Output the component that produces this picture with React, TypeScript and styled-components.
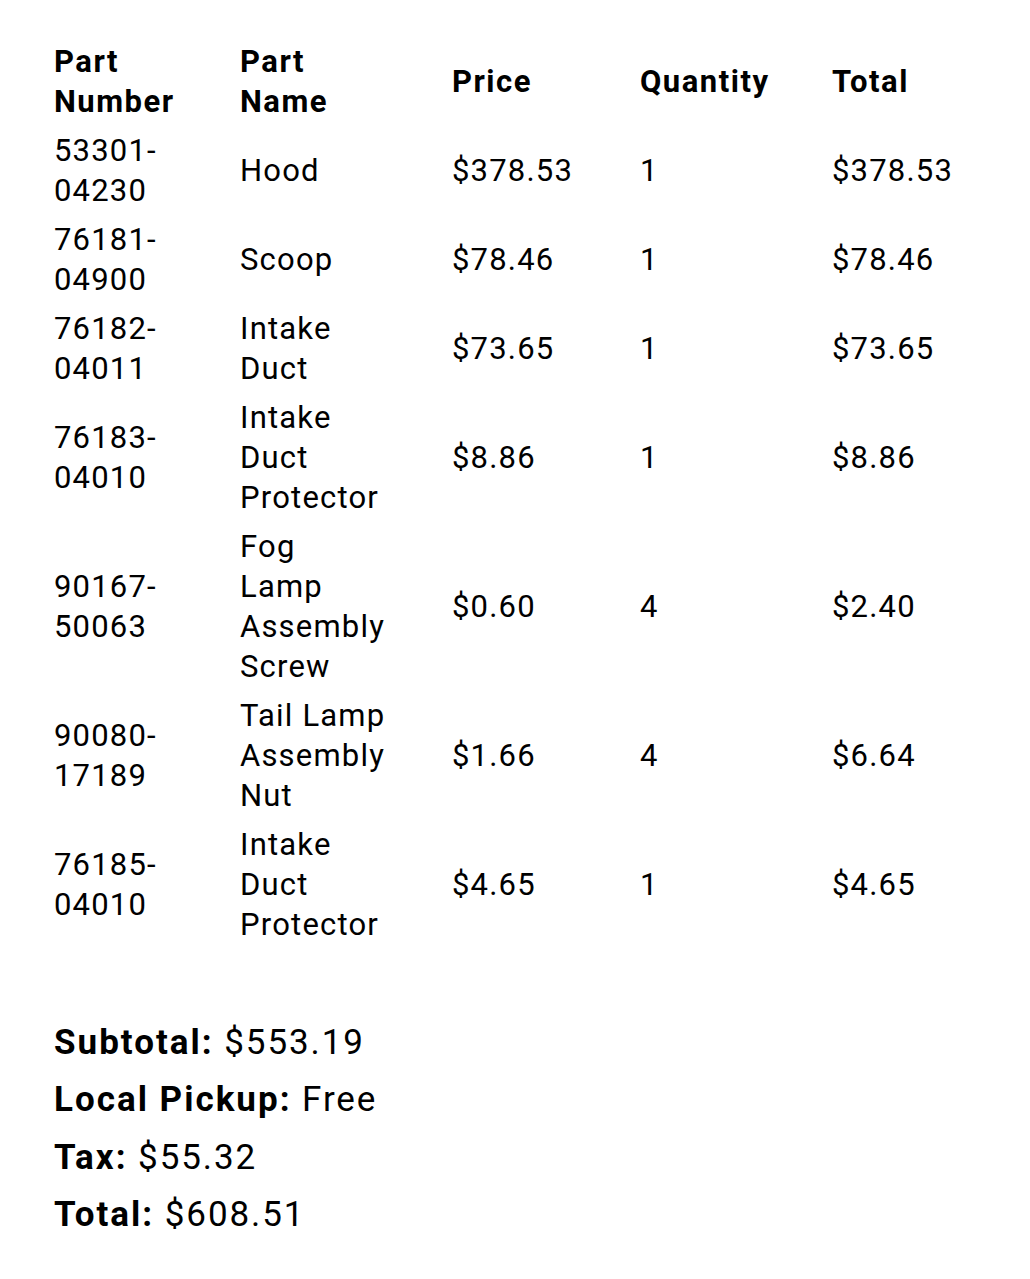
import React from "react";
import styled, { createGlobalStyle } from "styled-components";

const Global = createGlobalStyle`
  html, body { margin: 0; padding: 0; background: #fff; }
  body { font-family: Roboto, "Noto Sans", Arial, sans-serif; color: #000; }
`;

const Page = styled.div`
  padding: 37px 0 40px 54px;
`;

const Table = styled.table`
  border-collapse: collapse;
  table-layout: fixed;
  width: 940px;
  font-size: 31px;
  letter-spacing: 1.2px;
  line-height: 40px;
`;

const Col = styled.col<{ $w: number }>`
  width: ${(p) => p.$w}px;
`;

const Th = styled.th<{ $pr?: number }>`
  text-align: left;
  font-weight: 700;
  letter-spacing: 1.5px;
  padding: 4.5px ${(p) => p.$pr ?? 10}px 4.5px 0;
  vertical-align: middle;
`;

const Td = styled.td<{ $pr?: number }>`
  text-align: left;
  font-weight: 400;
  padding: 4.5px ${(p) => p.$pr ?? 10}px 4.5px 0;
  vertical-align: middle;
`;

const Summary = styled.div`
  margin-top: 65px;
  font-size: 35px;
  letter-spacing: 1.9px;
  line-height: 57.4px;
`;

const SummaryRow = styled.div`
  white-space: nowrap;
`;

const Label = styled.strong`
  font-weight: 700;
  letter-spacing: 2px;
`;

const rows = [
  ["53301-04230", "Hood", "$378.53", "1", "$378.53"],
  ["76181-04900", "Scoop", "$78.46", "1", "$78.46"],
  ["76182-04011", "Intake Duct", "$73.65", "1", "$73.65"],
  ["76183-04010", "Intake Duct Protector", "$8.86", "1", "$8.86"],
  ["90167-50063", "Fog Lamp Assembly Screw", "$0.60", "4", "$2.40"],
  ["90080-17189", "Tail Lamp Assembly Nut", "$1.66", "4", "$6.64"],
  ["76185-04010", "Intake Duct Protector", "$4.65", "1", "$4.65"],
];

const NAME_PAD = 66;

export default function App() {
  return (
    <Page>
      <Global />
      <Table>
        <colgroup>
          <Col $w={186} />
          <Col $w={212} />
          <Col $w={188} />
          <Col $w={192} />
          <Col $w={162} />
        </colgroup>
        <thead>
          <tr>
            <Th>Part Number</Th>
            <Th $pr={NAME_PAD}>Part Name</Th>
            <Th>Price</Th>
            <Th>Quantity</Th>
            <Th>Total</Th>
          </tr>
        </thead>
        <tbody>
          {rows.map((r) => (
            <tr key={r[0] + r[1]}>
              <Td>{r[0].replace("-", "-\u200B")}</Td>
              <Td $pr={NAME_PAD}>{r[1]}</Td>
              <Td>{r[2]}</Td>
              <Td>{r[3]}</Td>
              <Td>{r[4]}</Td>
            </tr>
          ))}
        </tbody>
      </Table>
      <Summary>
        <SummaryRow>
          <Label>Subtotal:</Label> $553.19
        </SummaryRow>
        <SummaryRow>
          <Label>Local Pickup:</Label> Free
        </SummaryRow>
        <SummaryRow>
          <Label>Tax:</Label> $55.32
        </SummaryRow>
        <SummaryRow>
          <Label>Total:</Label> $608.51
        </SummaryRow>
      </Summary>
    </Page>
  );
}
